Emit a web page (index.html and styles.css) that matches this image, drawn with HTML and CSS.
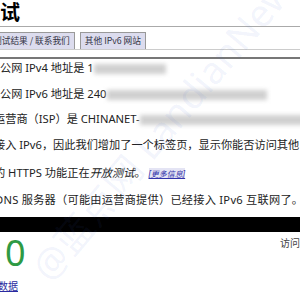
FILE: index.html
```html
<!DOCTYPE html>
<html lang="zh-CN">
<head>
    <meta charset="UTF-8">
    <meta name="viewport" content="width=device-width, initial-scale=1.0">
    <title>IPv6 测试</title>
    <link rel="stylesheet" href="styles.css">
</head>
<body>
    <div class="page">
        <h1 class="title">测试</h1>

        <div class="tabs">
            <span class="tab">测试结果 / 联系我们</span>
            <span class="tab">其他 IPv6 网站</span>
        </div>

        <div class="content">
            <p class="row">公网 IPv4 地址是 1<span class="blur blur-a"></span></p>
            <p class="row">公网 IPv6 地址是 240<span class="blur blur-b"></span></p>
            <p class="row cut">运营商（ISP）是 CHINANET-<span class="blur blur-c"></span></p>
            <p class="row cut">接入 IPv6，因此我们增加了一个标签页，显示你能否访问其他</p>
            <p class="row cut more">的 HTTPS 功能正在<em>开放测试</em>。 <a class="info" href="#">[更多信息]</a></p>
            <p class="row cut-d">DNS 服务器（可能由运营商提供）已经接入 IPv6 互联网了。</p>
        </div>

        <div class="bar"></div>

        <div class="score">
            <span class="num">0</span>
            <span class="visit">访问</span>
        </div>

        <a class="data" href="#">数据</a>

        <div class="mark">@蓝点网 LandianNews</div>
    </div>
</body>
</html>
```

FILE: styles.css
```css
body {
    margin: 0;
    font-family: "Noto Sans", "Noto Sans CJK SC", sans-serif;
    color: #222;
    background: #fff;
    overflow: hidden;
}
.page {
    position: relative;
    width: 300px;
    height: 300px;
    overflow: hidden;
}
.title {
    margin: 0 0 0 -20px;
    height: 26px;
    font-size: 20px;
    line-height: 24px;
    font-weight: bold;
    color: #000;
    border-bottom: 1px solid #aaa;
    font-family: "Noto Sans CJK SC", sans-serif;
}
.tabs {
    display: flex;
    gap: 5px;
    margin-top: 5px;
    border-bottom: 1px solid #ccc;
    margin-left: -12px;
}
.tab {
    height: 16px;
    line-height: 16px;
    padding: 0 4px;
    font-size: 8.7px;
    color: #334;
    background: #dcdcee;
    border: 1px solid #999;
    border-bottom: none;
    font-family: "Noto Sans CJK SC", sans-serif;
}
.content {
    margin-top: 7px;
    border-top: 2px solid #777;
}
.row {
    margin: 0 0 9.5px;
    font-size: 11.2px;
    line-height: 16px;
    white-space: nowrap;
}
.row:first-child {
    margin-top: 1px;
}
.cut { margin-left: -6px; }
.cut-d {
    margin-left: -5px;
    letter-spacing: 0.25px;
}
.more { margin-top: 12.5px; }
.row em {
    font-style: italic;
}
.info {
    font-size: 8px;
    font-style: italic;
    color: #33a;
    background: #e4e4f4;
}
.blur {
    display: inline-block;
    height: 10px;
    vertical-align: middle;
    background: #d0d0d0;
    filter: blur(2px);
}
.blur-a { width: 72px; }
.blur-b { width: 160px; }
.blur-c { width: 170px; }
.bar {
    height: 15px;
    margin-top: 7px;
    background: #000;
}
.score {
    display: flex;
    justify-content: space-between;
    align-items: flex-start;
    height: 46px;
}
.num {
    margin: 0 0 0 5px;
    font-size: 36px;
    line-height: 42px;
    color: #2e9a44;
}
.visit {
    margin: 3px -12px 0 0;
    width: 32px;
    font-size: 10px;
    color: #444;
}
.data {
    display: block;
    margin-left: -2px;
    font-size: 10px;
    color: #2a2aa0;
}
.mark {
    position: absolute;
    left: -30px;
    top: 100px;
    width: 380px;
    transform: rotate(-50deg);
    font-size: 38px;
    color: rgba(70, 110, 220, 0.08);
    white-space: nowrap;
}
```
